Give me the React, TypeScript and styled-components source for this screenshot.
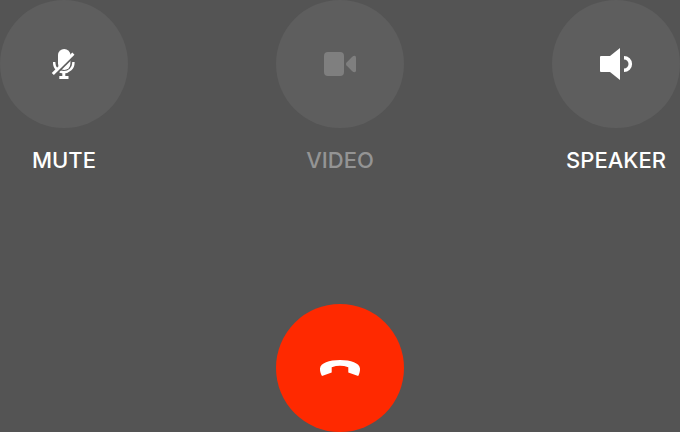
import React from "react";
import styled, { createGlobalStyle } from "styled-components";

const GlobalStyle = createGlobalStyle`
  *, *::before, *::after { box-sizing: border-box; }
  body {
    margin: 0;
    background: #545454;
    font-family: Inter, "Liberation Sans", sans-serif;
  }
`;

const CallControls = styled.main`
  display: flex;
  flex-direction: column;
  gap: 128px;
`;

const ControlRow = styled.div<{ $align: "space-between" | "center" }>`
  display: flex;
  justify-content: ${({ $align }) => $align};
`;

const Control = styled.div`
  display: flex;
  flex-direction: column;
  align-items: center;
  gap: 16px;
`;

const RoundButton = styled.button<{ $tone?: "plain" | "danger" }>`
  display: flex;
  align-items: center;
  justify-content: center;
  width: 128px;
  height: 128px;
  padding: 0;
  border: 0;
  border-radius: 50%;
  background: ${({ $tone }) => ($tone === "danger" ? "#ff2900" : "#5e5e5e")};
  color: #ffffff;
  cursor: pointer;

  &:disabled {
    color: #7f7f7f;
    cursor: default;
  }
`;

const Label = styled.label<{ $dimmed?: boolean }>`
  font-size: 22px;
  font-weight: 500;
  line-height: 32px;
  color: ${({ $dimmed }) => ($dimmed ? "#949494" : "#ffffff")};
`;

const Icon = styled.svg`
  display: block;
  width: 48px;
  height: 48px;
`;

const MuteIcon = () => (
  <Icon viewBox="0 0 48 48" aria-hidden="true">
    <defs>
      <mask id="slash-gap" maskUnits="userSpaceOnUse" x="0" y="0" width="48" height="48">
        <rect width="48" height="48" fill="#fff" />
        <path d="M10.500 39.200 37.500 12.500" stroke="#000" strokeWidth="2.200" />
      </mask>
    </defs>
    <g mask="url(#slash-gap)">
      <rect x="18" y="9" width="12.400" height="21" rx="6.200" fill="currentColor" />
      <path d="M14.200 22v1a9.600 9.200 0 0 0 19.200 0v-1" fill="none" stroke="currentColor" strokeWidth="2.400" />
    </g>
    <path d="M22.300 32h3v4h3.200v3h-9.200v-3h3z" fill="currentColor" />
    <path d="M12.800 34 33.400 13.600" stroke="currentColor" strokeWidth="3" />
  </Icon>
);

const VideoIcon = () => (
  <Icon viewBox="0 0 48 48" fill="currentColor" aria-hidden="true">
    <rect x="8" y="12" width="20" height="24" rx="4" />
    <path d="M30.400 22.800 36 17q1.200-1.200 2.600-1.200Q40 15.800 40 17.500v13Q40 32.200 38.600 32.200 37.200 32.200 36 31l-5.600-5.800Q29.300 24 30.400 22.800z" />
  </Icon>
);

const SpeakerIcon = () => (
  <Icon viewBox="0 0 48 48" aria-hidden="true">
    <path d="M9 16h9L28 8v32L18 32H9a1 1 0 0 1-1-1V17a1 1 0 0 1 1-1z" fill="currentColor" />
    <path d="M32 17.700a6.300 6.300 0 0 1 0 12.600" fill="none" stroke="currentColor" strokeWidth="3.600" />
  </Icon>
);

const HangUpIcon = () => (
  <Icon viewBox="0 0 48 48" fill="currentColor" aria-hidden="true">
    <path d="M4 24.500C4.500 19 13 16 24 16s19.500 3 20 8.500c.1 2.500-.5 5-1.800 7.500L32.300 28.500v-5.300Q28 21.800 24 21.800t-8.300 1.400v5.300L6 32C4.600 29.500 3.900 27 4 24.500z" />
  </Icon>
);

const App: React.FC = () => (
  <>
    <GlobalStyle />
    <CallControls>
      <ControlRow $align="space-between">
        <Control>
          <RoundButton id="mute" type="button"><MuteIcon /></RoundButton>
          <Label htmlFor="mute">MUTE</Label>
        </Control>
        <Control>
          <RoundButton id="video" type="button" disabled><VideoIcon /></RoundButton>
          <Label htmlFor="video" $dimmed>VIDEO</Label>
        </Control>
        <Control>
          <RoundButton id="speaker" type="button"><SpeakerIcon /></RoundButton>
          <Label htmlFor="speaker">SPEAKER</Label>
        </Control>
      </ControlRow>
      <ControlRow $align="center">
        <RoundButton type="button" $tone="danger" aria-label="End call"><HangUpIcon /></RoundButton>
      </ControlRow>
    </CallControls>
  </>
);

export default App;
